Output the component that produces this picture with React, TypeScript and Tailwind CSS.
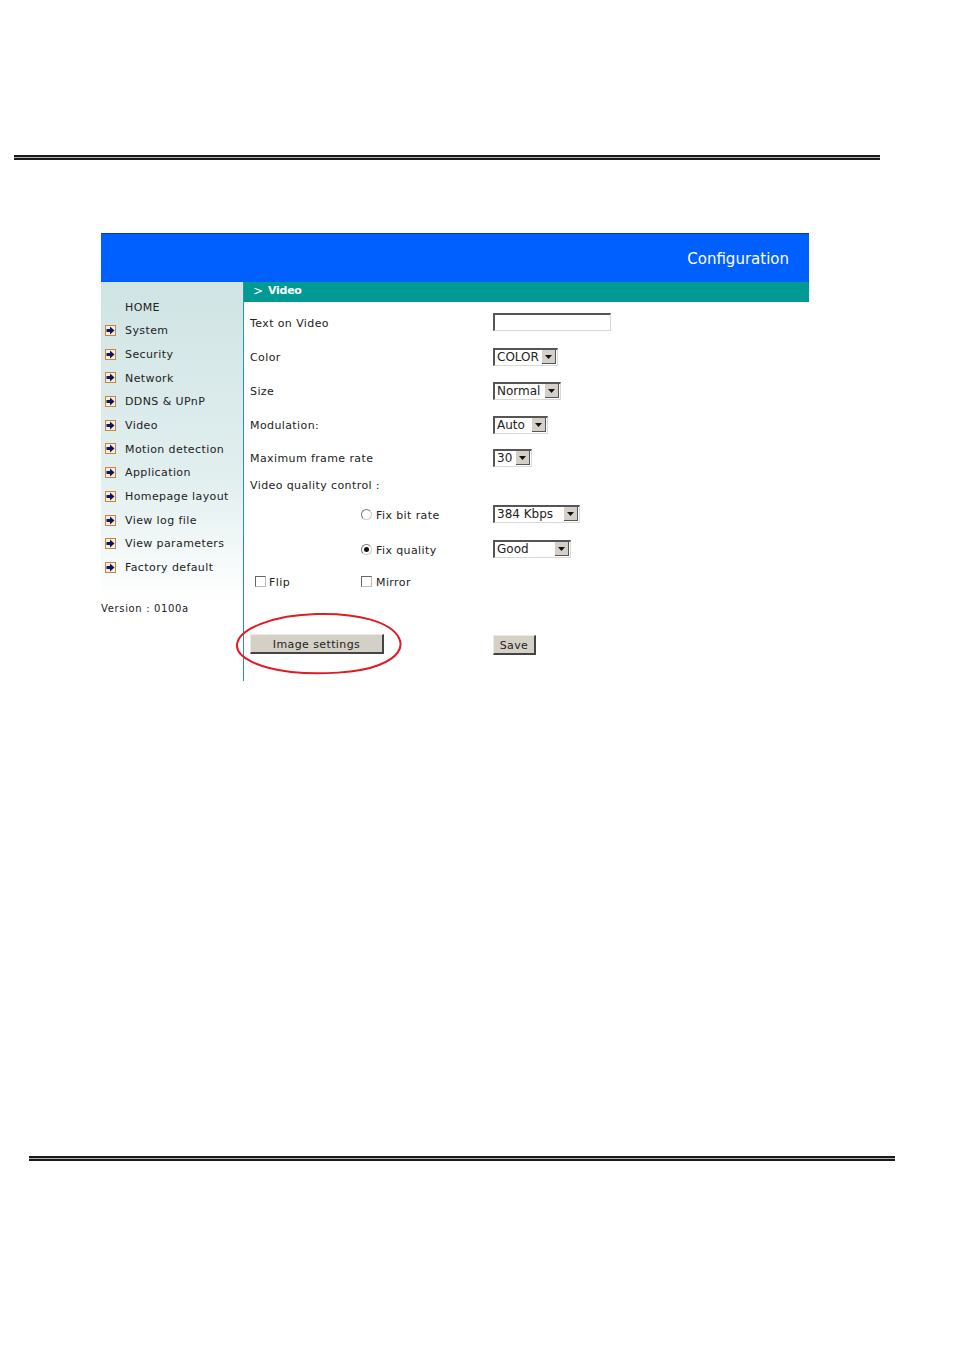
const menu = ["System", "Security", "Network", "DDNS & UPnP", "Video", "Motion detection", "Application", "Homepage layout", "View log file", "View parameters", "Factory default"]

function Rule({ className }: { className: string }) {
  return (
    <div className={`h-[5px] w-[866px] flex flex-col ${className}`}>
      <div className="h-[2px] bg-[#1a1a1a]" />
      <div className="h-[1px] bg-[#b0b0b0]" />
      <div className="h-[2px] bg-[#1a1a1a]" />
    </div>
  )
}

function ArrowIcon() {
  return (
    <span className="w-[11px] h-[11px] mr-[9px] border border-[#c8843c] bg-[#f4f0e0] flex items-center justify-center shrink-0">
      <svg width="9" height="9" viewBox="0 0 9 9">
        <path d="M0.5 3h3.5V0.5l4.5 4L4 8.5V6H0.5z" fill="#14145c" />
      </svg>
    </span>
  )
}

function Select({ value, width }: { value: string; width: string }) {
  return (
    <div className={`h-[18px] mb-[1px] flex items-center bg-white border-t-2 border-l-2 border-t-[#555] border-l-[#555] border-b border-r border-b-[#d8d8d4] border-r-[#d8d8d4] ${width}`}>
      <span className="pl-[2px] flex-1 text-[12px] tracking-normal text-[#222] whitespace-nowrap overflow-hidden">{value}</span>
      <span className="w-[14px] h-[14px] mr-[1px] bg-[#d4d0c8] border-r border-b border-r-[#555] border-b-[#555] flex items-center justify-center shrink-0">
        <svg width="7" height="4" viewBox="0 0 7 4">
          <path d="M0 0h7L3.5 4z" fill="#111" />
        </svg>
      </span>
    </div>
  )
}

function Row({ height, label, children }: { height: string; label?: string; children?: React.ReactNode }) {
  return (
    <div className={`flex items-center pl-[6px] ${height}`}>
      <span className="w-[243px] shrink-0 pt-[2px] whitespace-nowrap">{label}</span>
      {children}
    </div>
  )
}

function Radio({ checked }: { checked?: boolean }) {
  return (
    <span className="w-[11px] h-[11px] rounded-full bg-white border border-[#777] border-r-[#ccc] border-b-[#ccc] flex items-center justify-center shrink-0">
      {checked && <span className="w-[5px] h-[5px] rounded-full bg-[#111]" />}
    </span>
  )
}

function Check() {
  return <span className="w-[11px] h-[11px] mb-[2px] bg-white border border-[#666] border-r-[#bbb] border-b-[#bbb] shrink-0" />
}

export default function App() {
  return (
    <div className="w-[954px] h-[1351px] bg-white overflow-hidden pt-[155px] text-[11px] tracking-[0.4px] text-[#222] font-['DejaVu_Sans',sans-serif]">
      <Rule className="ml-[14px]" />

      {/* Config panel */}
      <div className="ml-[101px] mt-[73px] w-[708px]">
        <div className="h-[49px] bg-[#0060ff] border-t border-[#0a3f9e] flex items-center justify-end pt-[3px] pr-[20px] text-white text-[15px] tracking-normal">
          Configuration
        </div>
        <div className="flex h-[399px]">
          <aside className="w-[142px] shrink-0 bg-gradient-to-b from-[#d0e4e4] via-[#e2efef] via-50% to-white to-80%">
            <div className="h-[13px]" />
            <div className="h-[23.7px] pl-[24px] pt-[2px] flex items-center">HOME</div>
            {menu.map((m) => (
              <div key={m} className="h-[23.7px] pl-[4px] flex items-center whitespace-nowrap">
                <ArrowIcon />
                <span className="pt-[2px]">{m}</span>
              </div>
            ))}
            <div className="mt-[17px] h-[24px] flex items-center text-[10px] tracking-[0.65px] whitespace-nowrap">Version : 0100a</div>
          </aside>

          <main className="relative flex-1 border-l border-[#1f9aa5]">
            <div className="h-[20px] bg-[#009a94] text-white flex items-center pl-[9px] pb-[2px] tracking-normal">
              <span className="mr-[5px] text-[12px]">&gt;</span>
              <span className="font-bold tracking-[-0.3px]">Video</span>
            </div>
            <div className="h-[4px]" />
            <Row height="h-[34px]" label="Text on Video">
              <div className="w-[118px] h-[18px] mb-[2px] bg-white border-t-2 border-l-2 border-t-[#555] border-l-[#555] border-b border-r border-b-[#d8d8d4] border-r-[#d8d8d4]" />
            </Row>
            <Row height="h-[34px]" label="Color"><Select value="COLOR" width="w-[65px]" /></Row>
            <Row height="h-[34px]" label="Size"><Select value="Normal" width="w-[68px]" /></Row>
            <Row height="h-[34px]" label="Modulation:"><Select value="Auto" width="w-[55px]" /></Row>
            <Row height="h-[32px]" label="Maximum frame rate"><Select value="30" width="w-[39px]" /></Row>
            <Row height="h-[22px]" label="Video quality control :" />
            <div className="flex items-center h-[36px]">
              <div className="w-[117px] shrink-0" />
              <div className="w-[132px] shrink-0 flex items-center gap-[4px]"><Radio /><span className="pt-[5px]">Fix bit rate</span></div>
              <Select value="384 Kbps" width="w-[87px]" />
            </div>
            <div className="flex items-center h-[34px]">
              <div className="w-[117px] shrink-0" />
              <div className="w-[132px] shrink-0 flex items-center gap-[4px]"><Radio checked /><span className="pt-[4px]">Fix quality</span></div>
              <Select value="Good" width="w-[78px]" />
            </div>
            <div className="flex items-center h-[32px]">
              <div className="w-[117px] shrink-0 pl-[11px] flex items-center gap-[3px]"><Check /><span className="pt-[2px]">Flip</span></div>
              <div className="flex items-center gap-[4px]"><Check /><span className="pt-[2px]">Mirror</span></div>
            </div>
            <div className="flex items-center mt-[29px] h-[34px] pl-[6px]">
              <button className="w-[134px] h-[20px] pt-[2px] bg-[#d4d0c8] border border-[#eeeae2] border-r-[#444] border-b-[#444] border-r-2 border-b-2">Image settings</button>
              <button className="ml-[109px] mt-[1px] w-[43px] h-[20px] pt-[2px] bg-[#d4d0c8] border border-[#eeeae2] border-r-[#444] border-b-[#444] border-r-2 border-b-2">Save</button>
            </div>
            {/* hand drawn marker round the button */}
            <svg className="absolute left-[-9px] top-[330px]" width="170" height="64" viewBox="0 0 170 64" fill="none">
              <path d="M2 33C3 17 38 3 82 2c42-1 74 8 82 24 5 10-2 20-20 27-20 8-60 10-88 7C25 56 1 46 2 33z" stroke="#e01b24" strokeWidth="2" />
            </svg>
          </main>
        </div>
      </div>

      <Rule className="ml-[29px] mt-[475px]" />
    </div>
  )
}
